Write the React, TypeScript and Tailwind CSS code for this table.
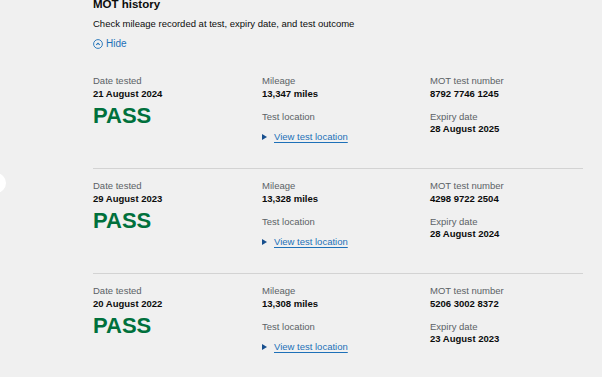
import React from "react";

type MotTest = {
  date: string;
  mileage: string;
  testNumber: string;
  expiry: string;
};

const tests: MotTest[] = [
  { date: "21 August 2024", mileage: "13,347 miles", testNumber: "8792 7746 1245", expiry: "28 August 2025" },
  { date: "29 August 2023", mileage: "13,328 miles", testNumber: "4298 9722 2504", expiry: "28 August 2024" },
  { date: "20 August 2022", mileage: "13,308 miles", testNumber: "5206 3002 8372", expiry: "23 August 2023" },
];

function Label({ children, className = "" }: { children: React.ReactNode; className?: string }) {
  return <div className={`text-[9.5px] leading-[12.5px] text-[#5b6266] ${className}`}>{children}</div>;
}

function Value({ children }: { children: React.ReactNode }) {
  return <div className="text-[9.5px] leading-[12.5px] font-bold text-[#0b0c0c]">{children}</div>;
}

function TestRow({ test }: { test: MotTest }) {
  return (
    <div className="grid h-[105px] grid-cols-[169px_168px_1fr] border-b border-[#d3d3d3] pt-[11px]">
      <div>
        <Label>Date tested</Label>
        <Value>{test.date}</Value>
        <div className="mt-[3.5px] text-[22px] leading-[24px] font-bold text-[#00703c]">PASS</div>
      </div>
      <div>
        <Label>Mileage</Label>
        <Value>{test.mileage}</Value>
        <Label className="mt-[10.5px]">Test location</Label>
        <div className="mt-[8px] flex items-center text-[9.5px] leading-[12.5px]">
          <span className="mr-[7px] h-0 w-0 border-y-[3.5px] border-l-[5px] border-y-transparent border-l-[#174f8e]" />
          <span className="text-[#1d70b8] underline decoration-1 underline-offset-2">View test location</span>
        </div>
      </div>
      <div>
        <Label>MOT test number</Label>
        <Value>{test.testNumber}</Value>
        <Label className="mt-[10.5px]">Expiry date</Label>
        <Value>{test.expiry}</Value>
      </div>
    </div>
  );
}

export default function App() {
  return (
    <div className="relative h-[377px] w-[602px] overflow-hidden bg-[#f0f0f0] font-['Liberation_Sans',Arial,sans-serif]">
      <div className="absolute top-[173px] left-[-14px] h-5 w-5 rounded-full bg-white" />
      <div className="pr-[19px] pl-[93px]">
        <div className="mt-[-4px] text-[11.5px] leading-[16px] font-bold text-[#0b0c0c]">MOT history</div>
        <div className="mt-[6px] text-[9.5px] leading-[12px] text-[#0b0c0c]">
          Check mileage recorded at test, expiry date, and test outcome
        </div>
        <div className="mt-[8px] flex items-center gap-[3px] text-[10px] leading-[12px] text-[#1d70b8]">
          <svg width="10" height="10" viewBox="0 0 10 10" fill="none">
            <circle cx="5" cy="5" r="4.4" stroke="#1d70b8" strokeWidth="0.9" />
            <path d="M3.3 5.9 L5 4.2 L6.7 5.9" stroke="#1d70b8" strokeWidth="1.1" />
          </svg>
          <span>Hide</span>
        </div>
        <div className="mt-[14px]">
          {tests.map((t) => (
            <TestRow key={t.testNumber} test={t} />
          ))}
        </div>
      </div>
    </div>
  );
}
